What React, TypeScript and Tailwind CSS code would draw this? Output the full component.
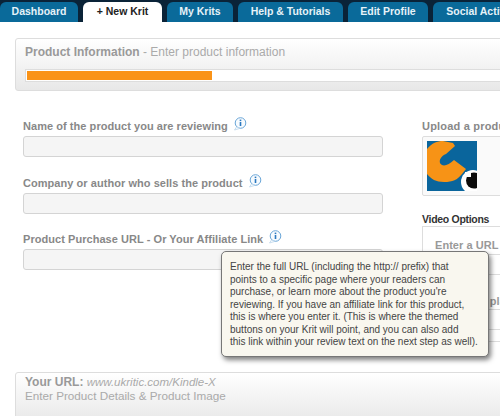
const InfoIcon = () => (
  <svg width="14" height="14" viewBox="0 0 14 14" className="mt-[-5px] shrink-0">
    <circle cx="7.5" cy="6" r="5.3" fill="#f7fbfe" stroke="#6aa6d8" strokeWidth="1" />
    <path d="M3.5 10 L1.5 13 L6.5 11.5" fill="#f7fbfe" stroke="#bcd5ea" strokeWidth="0.8" />
    <rect x="6.7" y="5" width="1.6" height="4" fill="#2a78c0" />
    <rect x="6.7" y="2.6" width="1.6" height="1.5" fill="#2a78c0" />
  </svg>
)

const tabs = [
  { name: 'Dashboard', w: 'w-[78px]' },
  { name: '+ New Krit', w: 'w-[79px]', active: true },
  { name: 'My Krits', w: 'w-[66px]' },
  { name: 'Help & Tutorials', w: 'w-[105px]' },
  { name: 'Edit Profile', w: 'w-[80px]' },
  { name: 'Social Activity', w: 'w-[98px]' },
]

const fields = [
  { label: 'Name of the product you are reviewing', gap: 'mb-[18px]' },
  { label: 'Company or author who sells the product', gap: 'mb-[17px]' },
  { label: 'Product Purchase URL - Or Your Affiliate Link', gap: 'mb-[17px]' },
]

const App = () => {
  return (
    <div className="relative h-[416px] w-[500px] overflow-hidden bg-white font-['Liberation_Sans',Arial,sans-serif]">
      <div className="flex h-[22px] gap-[5px] overflow-hidden bg-[#0a2338]">
        {tabs.map((tab) => (
          <div
            key={tab.name}
            className={`${tab.w} mt-[2px] flex shrink-0 items-center justify-center rounded-t-[6px] whitespace-nowrap text-[10.5px] font-bold ${
              tab.active ? 'bg-white text-[#222]' : 'bg-[#0a6a9a] text-[#e6f2f8]'
            }`}
          >
            {tab.name}
          </div>
        ))}
      </div>

      <div className="ml-[15px] mt-[16px] h-[53px] w-[500px] rounded-[3px] border border-[#ddd] bg-gradient-to-b from-white to-[#e8e8e8] pl-[9px] pt-[5px]">
        <p className="text-[12px] leading-[16px] text-[#aaa]">
          <span className="font-bold text-[#999]">Product Information</span> - Enter product information
        </p>
        <div className="mt-[9px] h-[13px] w-full border border-[#ddd] bg-white p-[1px]">
          <div className="h-full w-[185px] bg-[#fa9318]" />
        </div>
      </div>

      <div className="mt-[27px] flex pl-[23px]">
        <div className="w-[360px] shrink-0">
          {fields.map((field) => (
            <div key={field.label} className={field.gap}>
              <div className="mb-[2px] flex h-[16px] items-center gap-[5px]">
                <span className="whitespace-nowrap text-[11px] font-bold tracking-[0.05px] text-[#888]">{field.label}</span>
                <InfoIcon />
              </div>
              <div className="h-[21px] rounded-[3px] border border-[#d4d4d4] bg-[#f5f5f5]" />
            </div>
          ))}
        </div>
        <div className="ml-[39px] w-[120px] shrink-0">
          <p className="h-[16px] whitespace-nowrap text-[11px] font-bold leading-[16px] tracking-[0.2px] text-[#888]">Upload a product</p>
          <div className="mt-[2px] h-[60px] w-[100px] rounded-[2px] border border-[#ddd] bg-[#fafafa] pl-[4px] pt-[4px]">
            <svg width="50" height="50" viewBox="0 0 50 50">
              <rect width="50" height="50" fill="#0a659c" />
              <path d="M0 8 C5 2 10 0 16 0 L26 2 L28 5 L19 13 C14 15 12 19 13 22 C15 26 21 25 27 19 L39 28 L35 33 C30 39 26 41 17 41 C9 41 4 38 0 33 Z" fill="#f79316" />
              <circle cx="46" cy="41" r="12" fill="#fff" />
              <circle cx="47" cy="39.5" r="8" fill="#0b0b0b" />
              <rect x="38" y="31" width="6" height="5" fill="#fff" />
            </svg>
          </div>
          <p className="mt-[16px] text-[10.5px] font-bold leading-[14px] tracking-[-0.3px] text-[#333]">Video Options</p>
          <div className="h-[116px] w-[100px] border border-b-[#ddd] border-l-[#ddd] border-t-[#ddd] border-r-transparent pl-[12px] pt-[11px]">
            <p className="whitespace-nowrap text-[11px] font-bold leading-[14px] tracking-[0.05px] text-[#999]">Enter a URL</p>
            <div className="mt-[2px] h-[21px] border border-[#ddd] bg-white" />
            <p className="mt-[19px] whitespace-nowrap text-[11px] font-bold leading-[14px] tracking-[0.05px] text-[#999]">Or embed player</p>
            <div className="mt-[1px] h-[21px] border border-[#ddd] bg-white" />
          </div>
        </div>
      </div>

      <div className="absolute left-[15px] top-[372px] h-[60px] w-[500px] rounded-[3px] border border-[#ddd] bg-gradient-to-b from-white to-[#e4e4e4] pl-[9px] pt-[3px]">
        <p className="text-[11.5px] leading-[13px] text-[#aaa]">
          <span className="text-[12px] font-bold leading-[13px] text-[#999]">Your URL:</span> <em>www.ukritic.com/Kindle-X</em>
        </p>
        <p className="text-[11.7px] leading-[13px] text-[#aaa]">Enter Product Details &amp; Product Image</p>
      </div>

      <div className="absolute left-[221px] top-[251px] h-[106px] w-[268px] rounded-[5px] border border-[#777] bg-[#f9f7ef] pl-[8px] pt-[9px] text-[10px] leading-[12.5px] text-[#444] shadow-[2px_3px_5px_rgba(0,0,0,0.5)]">
        <p className="whitespace-nowrap">Enter the full URL (including the http:// prefix) that</p>
        <p className="whitespace-nowrap">points to a specific page where your readers can</p>
        <p className="whitespace-nowrap">purchase, or learn more about the product you're</p>
        <p className="whitespace-nowrap">reviewing. If you have an affiliate link for this product,</p>
        <p className="whitespace-nowrap">this is where you enter it. (This is where the themed</p>
        <p className="whitespace-nowrap">buttons on your Krit will point, and you can also add</p>
        <p className="whitespace-nowrap">this link within your review text on the next step as well).</p>
      </div>
    </div>
  )
}

export default App
